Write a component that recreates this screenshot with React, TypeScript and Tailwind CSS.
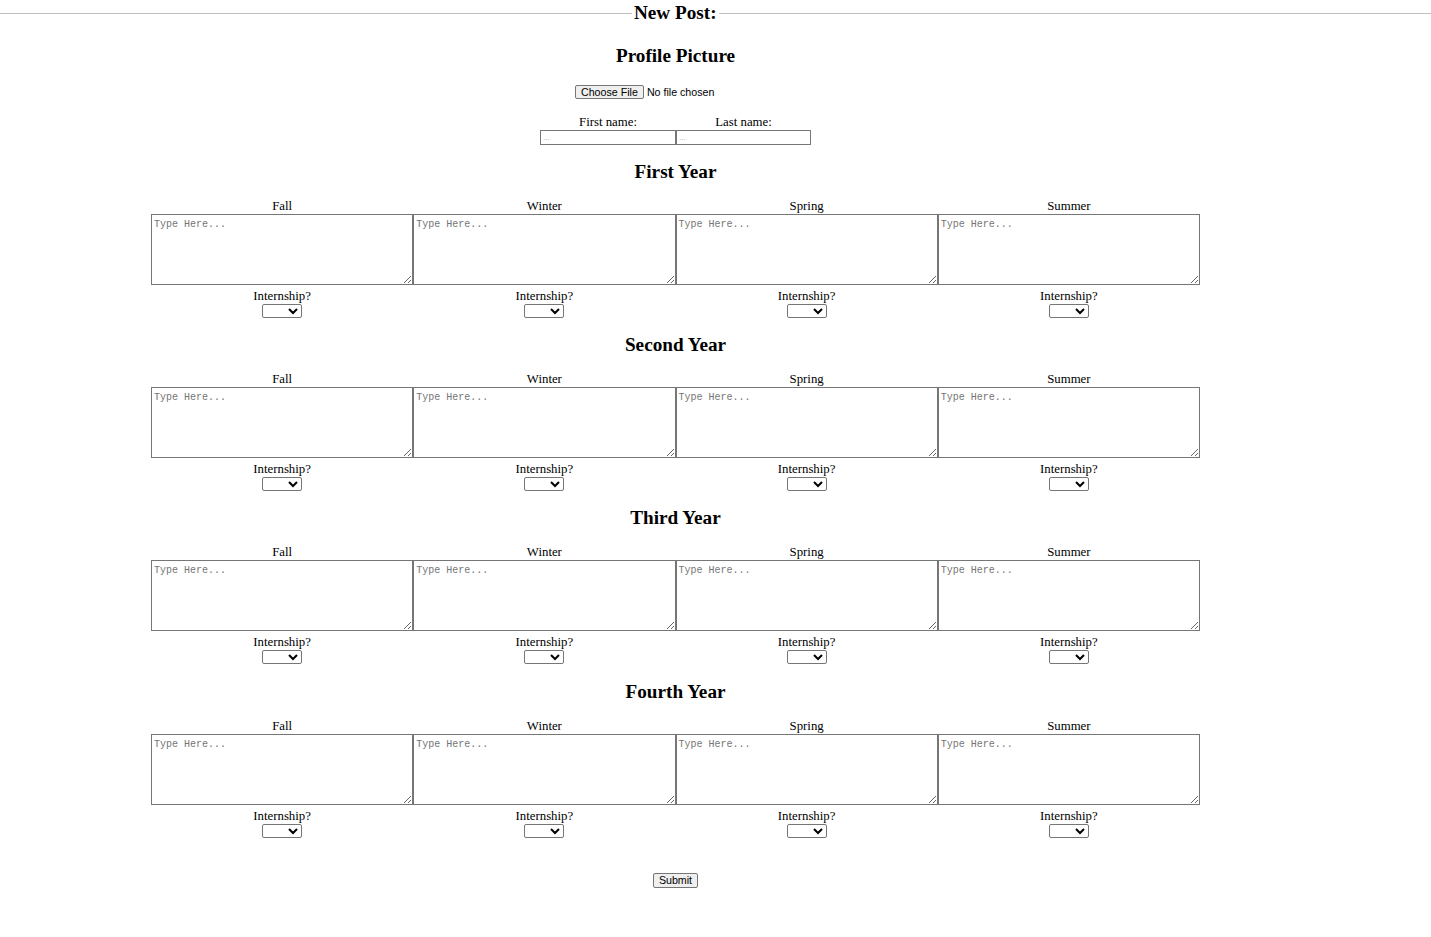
import React from "react";

const seasons = ["Fall", "Winter", "Spring", "Summer"];
const years = ["First Year", "Second Year", "Third Year", "Fourth Year"];

function YearSection({ title }: { title: string }) {
    return (
        <div className="flex flex-col items-center">
            <h2 className="mt-[16.33px] text-[19.2px] font-bold leading-[22px]">{title}</h2>
            <div className="mt-[16px] grid w-[1049px] grid-cols-4">
                {seasons.map((season) => (
                    <div key={season} className="flex flex-col items-center">
                        <label className="text-[12.8px] leading-[15px]">{season}</label>
                        <textarea
                            className="block h-[71px] w-full resize border border-[#767676] px-[2px] pt-[3px] font-['Liberation_Mono',monospace] text-[10px] leading-[13px] placeholder:text-[#757575]"
                            placeholder="Type Here..."
                        />
                        <label className="mt-[4px] text-[12.8px] leading-[15px]">Internship?</label>
                        <select className="h-[14px] w-[40px] rounded-[2px] border border-[#767676] bg-white font-['Liberation_Sans',sans-serif] text-[10.67px] leading-[12px]">
                            <option value=""></option>
                            <option value="yes">Yes</option>
                            <option value="no">No</option>
                        </select>
                    </div>
                ))}
            </div>
        </div>
    );
}

export default function App() {
    return (
        <form className="min-h-screen w-[1431px] bg-white font-['Liberation_Serif',serif] text-black">
            {/* legend row */}
            <div className="flex h-[26px] items-center">
                <div className="h-px w-[632px] bg-[#c0c0c0]" />
                <span className="px-[2px] text-[19.2px] font-bold leading-[22px]">New Post:</span>
                <div className="h-px flex-1 bg-[#c0c0c0]" />
            </div>

            <div className="flex w-[1351px] flex-col items-center">
                <h2 className="mt-[19px] text-[19.2px] font-bold leading-[22px]">Profile Picture</h2>

                {/* file picker, native-looking */}
                <div className="mt-[18px] flex h-[14px] w-[201px] items-center font-['Liberation_Sans',sans-serif] text-[10.67px] leading-[12px]">
                    <input type="file" id="fileInput" className="hidden" />
                    <label
                        htmlFor="fileInput"
                        className="flex h-[14px] items-center rounded-[2px] border border-[#767676] bg-[#efefef] px-[5px]"
                    >
                        Choose File
                    </label>
                    <span className="ml-[3px]">No file chosen</span>
                </div>

                <div className="mt-[15.5px] grid grid-cols-[136px_135px]">
                    <label className="text-center text-[12.8px] leading-[15px]">First name:</label>
                    <label className="text-center text-[12.8px] leading-[15px]">Last name:</label>
                    <input
                        className="h-[15px] w-full border border-[#767676] px-[2px] font-['Liberation_Sans',sans-serif] text-[8px] placeholder:text-[#a0a0a0]"
                        placeholder="..."
                    />
                    <input
                        className="h-[15px] w-full border border-[#767676] px-[2px] font-['Liberation_Sans',sans-serif] text-[8px] placeholder:text-[#a0a0a0]"
                        placeholder="..."
                    />
                </div>

                {years.map((y) => (
                    <YearSection key={y} title={y} />
                ))}

                <button
                    type="submit"
                    className="mt-[35px] h-[15px] rounded-[2px] border border-[#767676] bg-[#efefef] px-[5px] font-['Liberation_Sans',sans-serif] text-[10.67px] leading-[12px]"
                >
                    Submit
                </button>
            </div>
        </form>
    );
}
